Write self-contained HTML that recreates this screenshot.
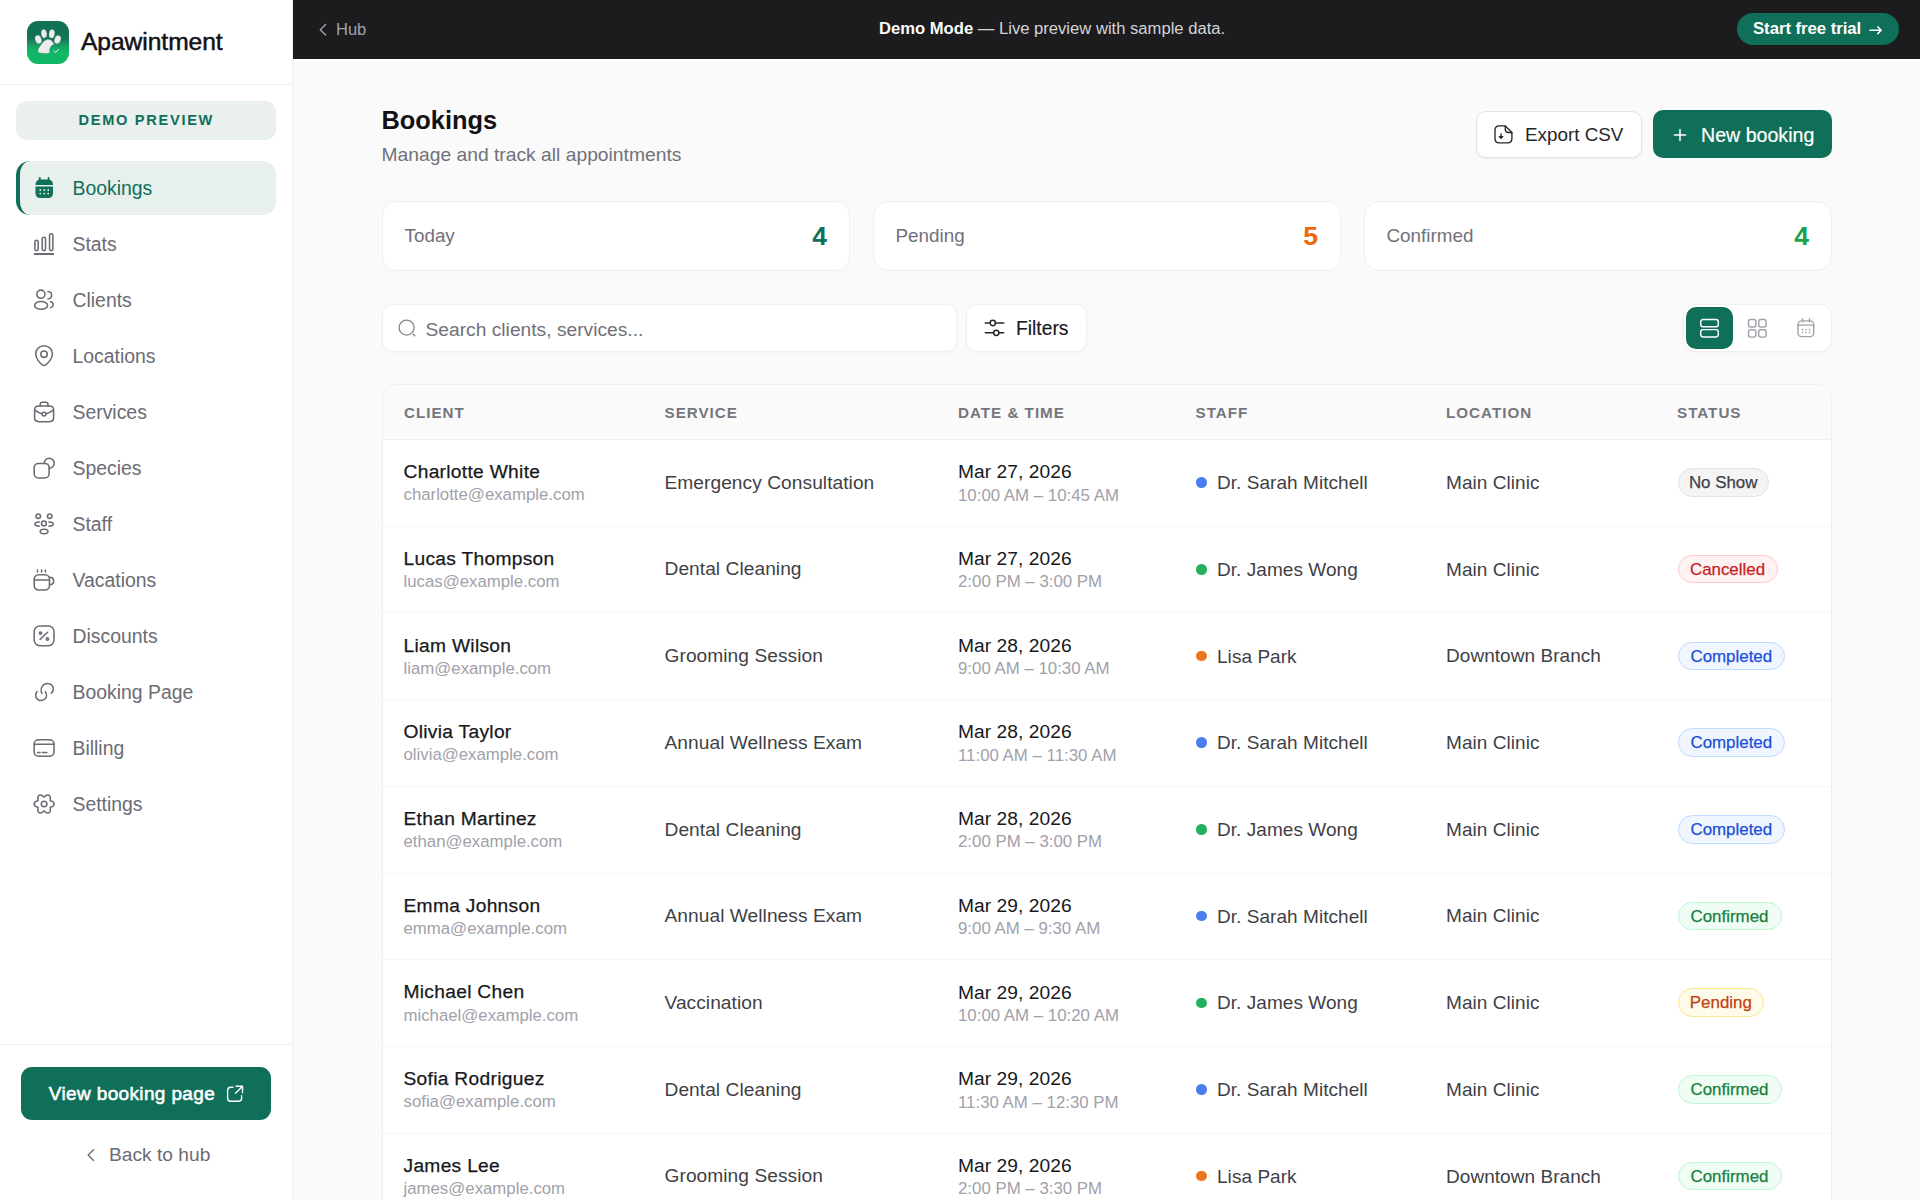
<!DOCTYPE html>
<html><head><meta charset="utf-8"><title>Bookings</title>
<style>
*{box-sizing:border-box;margin:0;padding:0}
html,body{width:1920px;height:1200px;overflow:hidden;background:#fafafa;font-family:"Liberation Sans",sans-serif}
.b{position:absolute}
.t{position:absolute;white-space:nowrap}
svg.b{display:block;overflow:visible}
</style></head><body>
<div class="b" style="left:0.00px;top:0.00px;width:293.00px;height:1200.00px;background:#fff;border-right:1px solid #efefef"></div>
<div class="b" style="left:0.00px;top:84.00px;width:292.00px;height:1.00px;background:#f0f0f0"></div>
<div class="b" style="left:27px;top:21px;width:42px;height:43px;border-radius:11px;overflow:hidden;background:linear-gradient(180deg,#117056 0%,#127357 40%,#1c8862 50%,#14a963 62%,#10b866 72%,#10b866 100%)">
<svg width="42" height="43" viewBox="0 0 42 43" fill="none">
<g fill="#ececec" stroke="#0c5a44" stroke-width="0.5" stroke-opacity="0.6">
<ellipse cx="11.3" cy="18.4" rx="3.2" ry="4.5" transform="rotate(-20 11.3 18.4)"/>
<ellipse cx="17" cy="12.7" rx="2.95" ry="4.45" transform="rotate(-8 17 12.7)"/>
<ellipse cx="24.85" cy="12.8" rx="2.95" ry="4.5" transform="rotate(8 24.85 12.8)"/>
<ellipse cx="30.6" cy="18.6" rx="3.2" ry="4.4" transform="rotate(20 30.6 18.6)"/>
<path d="M12.5 32C10.3 31.5 10.4 28.6 12.4 26C14.4 23.2 17 19 20.5 18.2C23.5 17.8 26 20.5 27.2 23.3A6.6 6.6 0 0 0 22.9 31.9C19.5 32.6 15.5 32.6 12.5 32Z"/>
</g>
<path d="M26.9 30L28.5 31.5L31.6 28.3" stroke="#f2f7f4" stroke-width="1" stroke-linecap="round" stroke-linejoin="round"/>
</svg></div>
<div class="t " style="left:81.00px;top:30.27px;font-size:24.6px;line-height:24.6px;color:#121214;font-weight:400;-webkit-text-stroke:0.5px #121214;letter-spacing:-0.05px">Apawintment</div>
<div class="b" style="left:16.00px;top:101.00px;width:260.00px;height:39.00px;background:#e9f0ee;border-radius:11px"></div>
<div class="t " style="left:78.50px;top:113.24px;font-size:14.6px;line-height:14.6px;color:#106f59;font-weight:700;letter-spacing:1.7px">DEMO PREVIEW</div>
<div class="b" style="left:16px;top:161px;width:260px;height:54px;background:#e7f0ed;border-radius:13px;overflow:hidden">
<div class="b" style="left:0;top:0;width:30px;height:54px;border-left:4px solid #106f59;border-radius:14px 0 0 14px"></div></div>
<svg class="b" style="left:34.50px;top:177.00px;" width="19" height="22" viewBox="0 0 19 22" fill="none"><path d="M4.8 0.9V3M13.6 0.9V3" stroke="#106f59" stroke-width="1.8" stroke-linecap="round"/><path d="M0.5 7.6C0.5 4.6 2.4 2.6 5.4 2.6H13.1C16.1 2.6 18 4.6 18 7.6V7.9H0.5Z" fill="#106f59"/><path d="M0.5 9.4H18V16.2C18 19.2 16.1 21 13.1 21H5.4C2.4 21 0.5 19.2 0.5 16.2Z" fill="#106f59"/><g fill="#e7f0ed"><circle cx="5.3" cy="13" r="0.95"/><circle cx="9.25" cy="13" r="0.95"/><circle cx="13.2" cy="13" r="0.95"/><circle cx="5.3" cy="16.6" r="0.95"/><circle cx="9.25" cy="16.6" r="0.95"/><circle cx="13.2" cy="16.6" r="0.95"/></g></svg>
<div class="t " style="left:72.50px;top:178.97px;font-size:19.4px;line-height:19.4px;color:#106f59;font-weight:400;">Bookings</div>
<svg class="b" style="left:34.00px;top:233.00px;" width="22" height="23" viewBox="0 0 22 23" fill="none"><g stroke="#6b6b74" stroke-width="1.55" stroke-linecap="round"><rect x="0.9" y="7.2" width="3.3" height="10.4" rx="1.65"/><rect x="8.2" y="4.2" width="3.3" height="13.4" rx="1.65"/><rect x="15.55" y="0.8" width="3.3" height="16.8" rx="1.65"/><path d="M0.6 21H19.2" stroke-width="1.8"/></g></svg>
<div class="t " style="left:72.50px;top:235.07px;font-size:19.4px;line-height:19.4px;color:#6b6b74;font-weight:400;">Stats</div>
<svg class="b" style="left:34.00px;top:289.00px;" width="22" height="23" viewBox="0 0 22 23" fill="none"><g stroke="#6b6b74" stroke-width="1.55" stroke-linecap="round"><circle cx="6.9" cy="5.2" r="4.1"/><ellipse cx="7.1" cy="16.4" rx="6.5" ry="3.9"/><path d="M14 2.6C16.6 2.8 17.7 4.6 17.6 6.3C17.5 8.2 16.2 9.8 14 9.9"/><path d="M16.5 12.8C18.4 13.3 19.3 14.6 19.2 15.8C19.1 17.2 18 18.4 16.6 18.8"/></g></svg>
<div class="t " style="left:72.50px;top:291.07px;font-size:19.4px;line-height:19.4px;color:#6b6b74;font-weight:400;">Clients</div>
<svg class="b" style="left:34.00px;top:345.00px;" width="22" height="23" viewBox="0 0 22 23" fill="none"><g stroke="#6b6b74" stroke-width="1.55" stroke-linecap="round"><path d="M10 0.8C14.8 0.8 18.45 4.4 18.45 9C18.45 13.5 14 18.5 11.3 20C10.5 20.6 9.5 20.6 8.7 20C6 18.5 1.7 13.5 1.7 9C1.7 4.4 5.2 0.8 10 0.8Z"/><circle cx="10.05" cy="9.2" r="3.2"/></g></svg>
<div class="t " style="left:72.50px;top:347.07px;font-size:19.4px;line-height:19.4px;color:#6b6b74;font-weight:400;">Locations</div>
<svg class="b" style="left:34.00px;top:401.00px;" width="22" height="23" viewBox="0 0 22 23" fill="none"><g stroke="#6b6b74" stroke-width="1.55" stroke-linecap="round"><path d="M4.8 5H15.4C17.8 5 19.6 6.6 19.6 9V16.6C19.6 19 17.9 20.7 15.5 20.7H4.7C2.3 20.7 0.6 19 0.6 16.6V9C0.6 6.6 2.4 5 4.8 5Z"/><path d="M6.2 5V3.5C6.2 2.2 7 1.3 8.3 1.3H11.9C13.2 1.3 14 2.2 14 3.5V5"/><path d="M0.8 9.2C2.8 10.8 5.2 12 8 12.7M12 12.7C14.8 12 17.3 10.8 19.4 9.2"/><circle cx="9.95" cy="13.1" r="1.95"/></g></svg>
<div class="t " style="left:72.50px;top:403.07px;font-size:19.4px;line-height:19.4px;color:#6b6b74;font-weight:400;">Services</div>
<svg class="b" style="left:34.00px;top:457.00px;" width="22" height="23" viewBox="0 0 22 23" fill="none"><g stroke="#6b6b74" stroke-width="1.55" stroke-linecap="round"><rect x="0.2" y="6.4" width="14.9" height="14.6" rx="4.2"/><path d="M10.2 6.4A5 5 0 1 1 15.1 11.2"/></g></svg>
<div class="t " style="left:72.50px;top:459.07px;font-size:19.4px;line-height:19.4px;color:#6b6b74;font-weight:400;">Species</div>
<svg class="b" style="left:34.00px;top:513.00px;" width="22" height="23" viewBox="0 0 22 23" fill="none"><g stroke="#6b6b74" stroke-width="1.55" stroke-linecap="round"><circle cx="4.25" cy="3.3" r="2.25"/><circle cx="15.7" cy="3.3" r="2.25"/><circle cx="9.9" cy="10.4" r="2.4"/><ellipse cx="10.1" cy="18.5" rx="3.9" ry="2.25"/><path d="M5.3 8.9C2.5 9 0.9 10 0.9 11.1C0.9 12.3 2.5 13.2 5.3 13.3"/><path d="M14.9 8.9C17.7 9 19.3 10 19.3 11.1C19.3 12.3 17.7 13.2 14.9 13.3"/></g></svg>
<div class="t " style="left:72.50px;top:515.07px;font-size:19.4px;line-height:19.4px;color:#6b6b74;font-weight:400;">Staff</div>
<svg class="b" style="left:34.00px;top:569.00px;" width="22" height="23" viewBox="0 0 22 23" fill="none"><g stroke="#6b6b74" stroke-width="1.55" stroke-linecap="round"><rect x="0.2" y="5.7" width="15.3" height="15.3" rx="4.5"/><path d="M0.2 10.9H15.5"/><path d="M15.5 8.3C18 8.3 19.6 9.8 19.6 12C19.6 14.2 18 15.8 15.5 15.8"/><path d="M3.5 0.9V2.9M7.6 0.9V2.9M11.4 0.9V2.9"/></g></svg>
<div class="t " style="left:72.50px;top:571.07px;font-size:19.4px;line-height:19.4px;color:#6b6b74;font-weight:400;">Vacations</div>
<svg class="b" style="left:34.00px;top:625.00px;" width="22" height="23" viewBox="0 0 22 23" fill="none"><g stroke="#6b6b74" stroke-width="1.55" stroke-linecap="round"><rect x="0.2" y="0.9" width="19.8" height="19.8" rx="5.6"/><path d="M6.1 14.4L13.6 7.25"/><circle cx="6.5" cy="8" r="1.1"/><circle cx="13.4" cy="14" r="1.15"/></g></svg>
<div class="t " style="left:72.50px;top:627.07px;font-size:19.4px;line-height:19.4px;color:#6b6b74;font-weight:400;">Discounts</div>
<svg class="b" style="left:34.00px;top:681.00px;" width="22" height="23" viewBox="0 0 22 23" fill="none"><g stroke="#6b6b74" stroke-width="1.55" stroke-linecap="round"><path d="M8 12.4C6.7 10.2 6.9 6.6 9.1 4.3C11.4 1.9 15.6 1.7 17.9 4.2C20 6.5 19.7 10.3 17.3 12.2"/><path d="M3.1 10.4C1.2 12.5 1.2 16 3.3 18.1C5.4 20.1 8.8 20.1 10.9 18C12.9 16 13 12.9 11.3 10.7"/></g></svg>
<div class="t " style="left:72.50px;top:683.07px;font-size:19.4px;line-height:19.4px;color:#6b6b74;font-weight:400;">Booking Page</div>
<svg class="b" style="left:34.00px;top:737.00px;" width="22" height="23" viewBox="0 0 22 23" fill="none"><g stroke="#6b6b74" stroke-width="1.55" stroke-linecap="round"><rect x="0.2" y="2.8" width="19.8" height="16.4" rx="4.2"/><path d="M0.2 7.25H20"/><path d="M3.5 15.5H6.1M8.4 15.5H12.9"/></g></svg>
<div class="t " style="left:72.50px;top:739.07px;font-size:19.4px;line-height:19.4px;color:#6b6b74;font-weight:400;">Billing</div>
<svg class="b" style="left:34.00px;top:793.00px;" width="22" height="23" viewBox="0 0 22 23" fill="none"><g stroke="#6b6b74" stroke-width="1.55" stroke-linecap="round"><path d="M20.10 11.00 L20.03 11.52 L19.84 12.02 L19.53 12.49 L19.13 12.92 L18.65 13.29 L18.11 13.60 L17.56 13.86 L17.02 14.08 L16.54 14.28 L16.16 14.50 L16.16 14.93 L16.23 15.46 L16.31 16.03 L16.36 16.64 L16.36 17.26 L16.28 17.86 L16.11 18.42 L15.86 18.93 L15.52 19.34 L15.10 19.66 L14.62 19.86 L14.08 19.95 L13.52 19.92 L12.95 19.78 L12.39 19.55 L11.85 19.24 L11.35 18.89 L10.89 18.54 L10.48 18.21 L10.10 18.00 L9.72 18.21 L9.31 18.54 L8.85 18.89 L8.35 19.24 L7.81 19.55 L7.25 19.78 L6.68 19.92 L6.12 19.95 L5.58 19.86 L5.10 19.66 L4.68 19.34 L4.34 18.93 L4.09 18.42 L3.92 17.86 L3.84 17.26 L3.84 16.64 L3.89 16.03 L3.97 15.46 L4.04 14.93 L4.04 14.50 L3.66 14.28 L3.18 14.08 L2.64 13.86 L2.09 13.60 L1.55 13.29 L1.07 12.92 L0.67 12.49 L0.36 12.02 L0.17 11.52 L0.10 11.00 L0.17 10.48 L0.36 9.98 L0.67 9.51 L1.07 9.08 L1.55 8.71 L2.09 8.40 L2.64 8.14 L3.18 7.92 L3.66 7.72 L4.04 7.50 L4.04 7.07 L3.97 6.54 L3.89 5.97 L3.84 5.36 L3.84 4.74 L3.92 4.14 L4.09 3.58 L4.34 3.07 L4.68 2.66 L5.10 2.34 L5.58 2.14 L6.12 2.05 L6.68 2.08 L7.25 2.22 L7.81 2.45 L8.35 2.76 L8.85 3.11 L9.31 3.46 L9.72 3.79 L10.10 4.00 L10.48 3.79 L10.89 3.46 L11.35 3.11 L11.85 2.76 L12.39 2.45 L12.95 2.22 L13.52 2.08 L14.08 2.05 L14.62 2.14 L15.10 2.34 L15.52 2.66 L15.86 3.07 L16.11 3.58 L16.28 4.14 L16.36 4.74 L16.36 5.36 L16.31 5.97 L16.23 6.54 L16.16 7.07 L16.16 7.50 L16.54 7.72 L17.02 7.92 L17.56 8.14 L18.11 8.40 L18.65 8.71 L19.13 9.08 L19.53 9.51 L19.84 9.98 L20.03 10.48 L20.10 11.00Z" stroke-linejoin="round"/><circle cx="10.1" cy="11" r="2.8"/></g></svg>
<div class="t " style="left:72.50px;top:795.07px;font-size:19.4px;line-height:19.4px;color:#6b6b74;font-weight:400;">Settings</div>
<div class="b" style="left:0.00px;top:1044.00px;width:292.00px;height:1.00px;background:#f0f0f0"></div>
<div class="b" style="left:21.00px;top:1067.00px;width:250.00px;height:53.00px;background:#106f59;border-radius:11px"></div>
<div class="t " style="left:48.80px;top:1084.11px;font-size:19.0px;line-height:19.0px;color:#fff;font-weight:400;letter-spacing:0.36px;-webkit-text-stroke:0.55px #fff">View booking page</div>
<svg class="b" style="left:225.50px;top:1084.50px;" width="18" height="18" viewBox="0 0 18 18" fill="none"><g stroke="#fff" stroke-width="1.4" stroke-linecap="round" stroke-linejoin="round"><path d="M7 2.2H4.8C2.9 2.2 1.6 3.5 1.6 5.4V13C1.6 14.9 2.9 16.2 4.8 16.2H12.4C14.3 16.2 15.6 14.9 15.6 13V10.8"/><path d="M10 1.3H16.5V7.8M16.5 1.3L9.5 8.3"/></g></svg>
<svg class="b" style="left:85.50px;top:1147.50px;" width="10" height="15" viewBox="0 0 10 15" fill="none"><path d="M7.5 1.8L2.2 7.1L7.5 12.4" stroke="#6b6b74" stroke-width="1.4" stroke-linecap="round" stroke-linejoin="round"/></svg>
<div class="t " style="left:109.00px;top:1144.99px;font-size:19.2px;line-height:19.2px;color:#6b6b74;font-weight:400;">Back to hub</div>
<div class="b" style="left:293.00px;top:0.00px;width:1627.00px;height:59.00px;background:#1c1c1e"></div>
<div class="b" style="left:293.00px;top:59.00px;width:1627.00px;height:1.50px;background:#fff"></div>
<svg class="b" style="left:317.50px;top:22.00px;" width="10" height="15" viewBox="0 0 10 15" fill="none"><path d="M7.6 2.5L2.25 7.8L7.6 13.1" stroke="#a1a1aa" stroke-width="1.4" stroke-linecap="round" stroke-linejoin="round"/></svg>
<div class="t " style="left:336.00px;top:20.73px;font-size:16.5px;line-height:16.5px;color:#a1a1aa;font-weight:400;">Hub</div>
<div class="t" style="left:879px;top:20.4px;font-size:16.62px;line-height:18px;color:#d4d4d8;white-space:nowrap"><span style="color:#fafafa;font-weight:700">Demo Mode</span> — Live preview with sample data.</div>
<div class="b" style="left:1737.00px;top:13.00px;width:162.00px;height:32.00px;background:#106f59;border-radius:16px"></div>
<div class="t " style="left:1753.00px;top:21.42px;font-size:16.75px;line-height:16.75px;color:#fff;font-weight:700;letter-spacing:-0.05px">Start free trial</div>
<svg class="b" style="left:1868.00px;top:25.00px;" width="15" height="10" viewBox="0 0 15 10" fill="none"><path d="M2 5.2H13.2M9.8 1.8L13.2 5.2L9.8 8.6" stroke="#fff" stroke-width="1.5" stroke-linecap="round" stroke-linejoin="round"/></svg>
<div class="t " style="left:381.50px;top:107.69px;font-size:25.4px;line-height:25.4px;color:#121214;font-weight:700;">Bookings</div>
<div class="t " style="left:381.50px;top:145.08px;font-size:19.27px;line-height:19.27px;color:#71717a;font-weight:400;">Manage and track all appointments</div>
<div class="b" style="left:1476.00px;top:111.00px;width:166.00px;height:47.00px;background:#fff;border:1px solid #e4e4e7;border-radius:10px;box-shadow:0 1px 2px rgba(0,0,0,0.07)"></div>
<svg class="b" style="left:1493.00px;top:124.00px;" width="21" height="21" viewBox="0 0 21 21" fill="none"><g stroke="#27272a" stroke-width="1.35" stroke-linecap="round" stroke-linejoin="round"><path d="M12.3 1.9H6.3C3.6 1.9 2 3.6 2 6.2V14.6C2 17.3 3.6 18.9 6.3 18.9H14.6C17.3 18.9 18.9 17.3 18.9 14.6V8.5Z"/><path d="M12.3 1.9V5.5C12.3 7.2 13.2 8.5 15.3 8.5H18.9"/><path d="M6.3 12.6L8 14.3L9.7 12.6M8 9.8V14.3"/></g></svg>
<div class="t " style="left:1525.00px;top:125.85px;font-size:18.84px;line-height:18.84px;color:#27272a;font-weight:400;">Export CSV</div>
<div class="b" style="left:1653.00px;top:110.00px;width:179.00px;height:48.00px;background:#106f59;border-radius:10px"></div>
<svg class="b" style="left:1673.30px;top:127.60px;" width="14" height="14" viewBox="0 0 14 14" fill="none"><path d="M7 1.5V12.5M1.5 7H12.5" stroke="#fff" stroke-width="1.5" stroke-linecap="round"/></svg>
<div class="t " style="left:1701.00px;top:125.60px;font-size:19.6px;line-height:19.6px;color:#fff;font-weight:400;-webkit-text-stroke:0.2px #fff">New booking</div>
<div class="b" style="left:382.00px;top:201.00px;width:468.00px;height:70.00px;background:#fff;border:1px solid #f0f0f0;border-radius:15px"></div>
<div class="t " style="left:404.50px;top:226.84px;font-size:18.85px;line-height:18.85px;color:#71717a;font-weight:400;">Today</div>
<div class="t" style="left:382px;width:445px;text-align:right;top:222.86px;font-size:26.5px;line-height:26.5px;color:#106f59;font-weight:700">4</div>
<div class="b" style="left:873.00px;top:201.00px;width:468.00px;height:70.00px;background:#fff;border:1px solid #f0f0f0;border-radius:15px"></div>
<div class="t " style="left:895.50px;top:226.84px;font-size:18.85px;line-height:18.85px;color:#71717a;font-weight:400;">Pending</div>
<div class="t" style="left:873px;width:445px;text-align:right;top:222.86px;font-size:26.5px;line-height:26.5px;color:#ea6a0d;font-weight:700">5</div>
<div class="b" style="left:1364.00px;top:201.00px;width:468.00px;height:70.00px;background:#fff;border:1px solid #f0f0f0;border-radius:15px"></div>
<div class="t " style="left:1386.50px;top:226.84px;font-size:18.85px;line-height:18.85px;color:#71717a;font-weight:400;">Confirmed</div>
<div class="t" style="left:1364px;width:445px;text-align:right;top:222.86px;font-size:26.5px;line-height:26.5px;color:#16a34a;font-weight:700">4</div>
<div class="b" style="left:382.00px;top:304.00px;width:575.00px;height:48.00px;background:#fff;border:1px solid #f0f0f0;border-radius:11px;box-shadow:0 1px 2px rgba(0,0,0,0.03)"></div>
<svg class="b" style="left:397.70px;top:318.70px;" width="19" height="19" viewBox="0 0 19 19" fill="none"><g stroke="#85858d" stroke-width="1.3" stroke-linecap="round"><circle cx="8.6" cy="8.6" r="7.5"/><path d="M15.2 15.2L16.8 16.8"/></g></svg>
<div class="t " style="left:425.50px;top:319.62px;font-size:19.23px;line-height:19.23px;color:#71717a;font-weight:400;">Search clients, services...</div>
<div class="b" style="left:966.00px;top:304.00px;width:121.00px;height:48.00px;background:#fff;border:1px solid #f0f0f0;border-radius:11px;box-shadow:0 1px 2px rgba(0,0,0,0.03)"></div>
<svg class="b" style="left:984.00px;top:318.00px;" width="21" height="20" viewBox="0 0 21 20" fill="none"><g stroke="#27272a" stroke-width="1.5" stroke-linecap="round"><path d="M1.3 5H6.1M11.5 5H19.7M1.3 14.8H9.5M15 14.8H19.7"/><circle cx="8.8" cy="5" r="2.65"/><circle cx="12.25" cy="14.8" r="2.65"/></g></svg>
<div class="t " style="left:1016.00px;top:318.96px;font-size:19.3px;line-height:19.3px;color:#18181b;font-weight:400;-webkit-text-stroke:0.15px #18181b">Filters</div>
<div class="b" style="left:1683.00px;top:304.00px;width:149.00px;height:48.00px;background:#fff;border:1px solid #f0f0f0;border-radius:12px;box-shadow:0 1px 2px rgba(0,0,0,0.03)"></div>
<div class="b" style="left:1685.50px;top:307.00px;width:47.50px;height:42.00px;background:#106f59;border-radius:10px"></div>
<svg class="b" style="left:1698.50px;top:317.50px;" width="21" height="21" viewBox="0 0 21 21" fill="none"><g stroke="#fff" stroke-width="1.45"><rect x="1.7" y="1.5" width="17.6" height="7.3" rx="2.3"/><rect x="1.7" y="11.6" width="17.6" height="7.3" rx="2.3"/></g></svg>
<svg class="b" style="left:1747.00px;top:317.50px;" width="21" height="21" viewBox="0 0 21 21" fill="none"><g stroke="#a1a1aa" stroke-width="1.45"><rect x="1.5" y="1.5" width="7.4" height="7.4" rx="2"/><rect x="11.7" y="1.5" width="7.4" height="7.4" rx="2"/><rect x="1.5" y="11.7" width="7.4" height="7.4" rx="2"/><rect x="11.7" y="11.7" width="7.4" height="7.4" rx="2"/></g></svg>
<svg class="b" style="left:1795.50px;top:317.00px;" width="20" height="22" viewBox="0 0 20 22" fill="none"><g stroke="#a1a1aa" stroke-width="1.4" stroke-linecap="round"><path d="M6.5 1.6V4.8M13.5 1.6V4.8"/><rect x="2" y="3.9" width="15.7" height="15.7" rx="3.6"/><path d="M2 8.1H17.7"/></g><g fill="#a1a1aa"><circle cx="6.5" cy="12.5" r="0.85"/><circle cx="10" cy="12.5" r="0.85"/><circle cx="13.5" cy="12.5" r="0.85"/><circle cx="6.5" cy="15.3" r="0.85"/><circle cx="10" cy="15.3" r="0.85"/><circle cx="13.5" cy="15.3" r="0.85"/></g></svg>
<div class="b" style="left:382.00px;top:384.00px;width:1450.00px;height:900.00px;background:#fff;border:1px solid #efefef;border-radius:15px;overflow:hidden"></div>
<div class="b" style="left:383.00px;top:385.00px;width:1448.00px;height:54.50px;background:#fafafa;border-radius:14px 14px 0 0"></div>
<div class="b" style="left:383.00px;top:439.00px;width:1448.00px;height:1.00px;background:#f0f0f0"></div>
<div class="t " style="left:404.00px;top:405.13px;font-size:15.2px;line-height:15.2px;color:#75757d;font-weight:700;letter-spacing:1.0px">CLIENT</div>
<div class="t " style="left:664.50px;top:405.13px;font-size:15.2px;line-height:15.2px;color:#75757d;font-weight:700;letter-spacing:1.0px">SERVICE</div>
<div class="t " style="left:958.00px;top:405.13px;font-size:15.2px;line-height:15.2px;color:#75757d;font-weight:700;letter-spacing:1.0px">DATE &amp; TIME</div>
<div class="t " style="left:1195.50px;top:405.13px;font-size:15.2px;line-height:15.2px;color:#75757d;font-weight:700;letter-spacing:1.0px">STAFF</div>
<div class="t " style="left:1446.00px;top:405.13px;font-size:15.2px;line-height:15.2px;color:#75757d;font-weight:700;letter-spacing:1.0px">LOCATION</div>
<div class="t " style="left:1677.00px;top:405.13px;font-size:15.2px;line-height:15.2px;color:#75757d;font-weight:700;letter-spacing:1.0px">STATUS</div>
<div class="t " style="left:403.50px;top:462.14px;font-size:19.2px;line-height:19.2px;color:#18181b;font-weight:400;-webkit-text-stroke:0.25px #18181b;letter-spacing:0.3px">Charlotte White</div>
<div class="t " style="left:403.50px;top:487.38px;font-size:16.8px;line-height:16.8px;color:#a1a1aa;font-weight:400;">charlotte@example.com</div>
<div class="t " style="left:664.50px;top:472.77px;font-size:19.17px;line-height:19.17px;color:#3f3f46;font-weight:400;letter-spacing:0.05px">Emergency Consultation</div>
<div class="t " style="left:958.00px;top:462.34px;font-size:19.2px;line-height:19.2px;color:#18181b;font-weight:400;letter-spacing:0.05px">Mar 27, 2026</div>
<div class="t " style="left:958.00px;top:487.64px;font-size:16.84px;line-height:16.84px;color:#a1a1aa;font-weight:400;">10:00 AM – 10:45 AM</div>
<div class="b" style="left:1196.00px;top:477.30px;width:10.60px;height:10.60px;background:#4a7ef0;border-radius:50%"></div>
<div class="t " style="left:1217.00px;top:473.11px;font-size:19.0px;line-height:19.0px;color:#3f3f46;font-weight:400;letter-spacing:0.05px">Dr. Sarah Mitchell</div>
<div class="t " style="left:1446.00px;top:472.91px;font-size:19.0px;line-height:19.0px;color:#3f3f46;font-weight:400;letter-spacing:0.05px">Main Clinic</div>
<div class="t" style="left:1677.5px;top:468.20px;width:91.4px;height:28.5px;text-align:center;border-radius:15px;background:#f4f4f5;border:1px solid #e4e4e7;color:#3f3f46;font-size:16.9px;line-height:27.5px;-webkit-text-stroke:0.25px #3f3f46">No Show</div>
<div class="b" style="left:383.00px;top:525.70px;width:1448.00px;height:1.00px;background:#f6f6f7"></div>
<div class="t " style="left:403.50px;top:548.84px;font-size:19.2px;line-height:19.2px;color:#18181b;font-weight:400;-webkit-text-stroke:0.25px #18181b;letter-spacing:0.3px">Lucas Thompson</div>
<div class="t " style="left:403.50px;top:574.08px;font-size:16.8px;line-height:16.8px;color:#a1a1aa;font-weight:400;">lucas@example.com</div>
<div class="t " style="left:664.50px;top:559.47px;font-size:19.17px;line-height:19.17px;color:#3f3f46;font-weight:400;letter-spacing:0.05px">Dental Cleaning</div>
<div class="t " style="left:958.00px;top:549.04px;font-size:19.2px;line-height:19.2px;color:#18181b;font-weight:400;letter-spacing:0.05px">Mar 27, 2026</div>
<div class="t " style="left:958.00px;top:574.34px;font-size:16.84px;line-height:16.84px;color:#a1a1aa;font-weight:400;">2:00 PM – 3:00 PM</div>
<div class="b" style="left:1196.00px;top:564.00px;width:10.60px;height:10.60px;background:#22b05a;border-radius:50%"></div>
<div class="t " style="left:1217.00px;top:559.81px;font-size:19.0px;line-height:19.0px;color:#3f3f46;font-weight:400;letter-spacing:0.05px">Dr. James Wong</div>
<div class="t " style="left:1446.00px;top:559.61px;font-size:19.0px;line-height:19.0px;color:#3f3f46;font-weight:400;letter-spacing:0.05px">Main Clinic</div>
<div class="t" style="left:1677.5px;top:554.90px;width:100px;height:28.5px;text-align:center;border-radius:15px;background:#fef2f2;border:1px solid #fecaca;color:#c81e1e;font-size:16.9px;line-height:27.5px;-webkit-text-stroke:0.25px #c81e1e">Cancelled</div>
<div class="b" style="left:383.00px;top:612.40px;width:1448.00px;height:1.00px;background:#f6f6f7"></div>
<div class="t " style="left:403.50px;top:635.54px;font-size:19.2px;line-height:19.2px;color:#18181b;font-weight:400;-webkit-text-stroke:0.25px #18181b;letter-spacing:0.3px">Liam Wilson</div>
<div class="t " style="left:403.50px;top:660.78px;font-size:16.8px;line-height:16.8px;color:#a1a1aa;font-weight:400;">liam@example.com</div>
<div class="t " style="left:664.50px;top:646.17px;font-size:19.17px;line-height:19.17px;color:#3f3f46;font-weight:400;letter-spacing:0.05px">Grooming Session</div>
<div class="t " style="left:958.00px;top:635.74px;font-size:19.2px;line-height:19.2px;color:#18181b;font-weight:400;letter-spacing:0.05px">Mar 28, 2026</div>
<div class="t " style="left:958.00px;top:661.04px;font-size:16.84px;line-height:16.84px;color:#a1a1aa;font-weight:400;">9:00 AM – 10:30 AM</div>
<div class="b" style="left:1196.00px;top:650.70px;width:10.60px;height:10.60px;background:#ee7420;border-radius:50%"></div>
<div class="t " style="left:1217.00px;top:646.51px;font-size:19.0px;line-height:19.0px;color:#3f3f46;font-weight:400;letter-spacing:0.05px">Lisa Park</div>
<div class="t " style="left:1446.00px;top:646.31px;font-size:19.0px;line-height:19.0px;color:#3f3f46;font-weight:400;letter-spacing:0.05px">Downtown Branch</div>
<div class="t" style="left:1677.5px;top:641.60px;width:107.6px;height:28.5px;text-align:center;border-radius:15px;background:#eff6ff;border:1px solid #bfdbfe;color:#1d4ed8;font-size:16.9px;line-height:27.5px;-webkit-text-stroke:0.25px #1d4ed8">Completed</div>
<div class="b" style="left:383.00px;top:699.10px;width:1448.00px;height:1.00px;background:#f6f6f7"></div>
<div class="t " style="left:403.50px;top:722.24px;font-size:19.2px;line-height:19.2px;color:#18181b;font-weight:400;-webkit-text-stroke:0.25px #18181b;letter-spacing:0.3px">Olivia Taylor</div>
<div class="t " style="left:403.50px;top:747.48px;font-size:16.8px;line-height:16.8px;color:#a1a1aa;font-weight:400;">olivia@example.com</div>
<div class="t " style="left:664.50px;top:732.87px;font-size:19.17px;line-height:19.17px;color:#3f3f46;font-weight:400;letter-spacing:0.05px">Annual Wellness Exam</div>
<div class="t " style="left:958.00px;top:722.44px;font-size:19.2px;line-height:19.2px;color:#18181b;font-weight:400;letter-spacing:0.05px">Mar 28, 2026</div>
<div class="t " style="left:958.00px;top:747.74px;font-size:16.84px;line-height:16.84px;color:#a1a1aa;font-weight:400;">11:00 AM – 11:30 AM</div>
<div class="b" style="left:1196.00px;top:737.40px;width:10.60px;height:10.60px;background:#4a7ef0;border-radius:50%"></div>
<div class="t " style="left:1217.00px;top:733.21px;font-size:19.0px;line-height:19.0px;color:#3f3f46;font-weight:400;letter-spacing:0.05px">Dr. Sarah Mitchell</div>
<div class="t " style="left:1446.00px;top:733.01px;font-size:19.0px;line-height:19.0px;color:#3f3f46;font-weight:400;letter-spacing:0.05px">Main Clinic</div>
<div class="t" style="left:1677.5px;top:728.30px;width:107.6px;height:28.5px;text-align:center;border-radius:15px;background:#eff6ff;border:1px solid #bfdbfe;color:#1d4ed8;font-size:16.9px;line-height:27.5px;-webkit-text-stroke:0.25px #1d4ed8">Completed</div>
<div class="b" style="left:383.00px;top:785.80px;width:1448.00px;height:1.00px;background:#f6f6f7"></div>
<div class="t " style="left:403.50px;top:808.94px;font-size:19.2px;line-height:19.2px;color:#18181b;font-weight:400;-webkit-text-stroke:0.25px #18181b;letter-spacing:0.3px">Ethan Martinez</div>
<div class="t " style="left:403.50px;top:834.18px;font-size:16.8px;line-height:16.8px;color:#a1a1aa;font-weight:400;">ethan@example.com</div>
<div class="t " style="left:664.50px;top:819.57px;font-size:19.17px;line-height:19.17px;color:#3f3f46;font-weight:400;letter-spacing:0.05px">Dental Cleaning</div>
<div class="t " style="left:958.00px;top:809.14px;font-size:19.2px;line-height:19.2px;color:#18181b;font-weight:400;letter-spacing:0.05px">Mar 28, 2026</div>
<div class="t " style="left:958.00px;top:834.44px;font-size:16.84px;line-height:16.84px;color:#a1a1aa;font-weight:400;">2:00 PM – 3:00 PM</div>
<div class="b" style="left:1196.00px;top:824.10px;width:10.60px;height:10.60px;background:#22b05a;border-radius:50%"></div>
<div class="t " style="left:1217.00px;top:819.91px;font-size:19.0px;line-height:19.0px;color:#3f3f46;font-weight:400;letter-spacing:0.05px">Dr. James Wong</div>
<div class="t " style="left:1446.00px;top:819.71px;font-size:19.0px;line-height:19.0px;color:#3f3f46;font-weight:400;letter-spacing:0.05px">Main Clinic</div>
<div class="t" style="left:1677.5px;top:815.00px;width:107.6px;height:28.5px;text-align:center;border-radius:15px;background:#eff6ff;border:1px solid #bfdbfe;color:#1d4ed8;font-size:16.9px;line-height:27.5px;-webkit-text-stroke:0.25px #1d4ed8">Completed</div>
<div class="b" style="left:383.00px;top:872.50px;width:1448.00px;height:1.00px;background:#f6f6f7"></div>
<div class="t " style="left:403.50px;top:895.64px;font-size:19.2px;line-height:19.2px;color:#18181b;font-weight:400;-webkit-text-stroke:0.25px #18181b;letter-spacing:0.3px">Emma Johnson</div>
<div class="t " style="left:403.50px;top:920.88px;font-size:16.8px;line-height:16.8px;color:#a1a1aa;font-weight:400;">emma@example.com</div>
<div class="t " style="left:664.50px;top:906.27px;font-size:19.17px;line-height:19.17px;color:#3f3f46;font-weight:400;letter-spacing:0.05px">Annual Wellness Exam</div>
<div class="t " style="left:958.00px;top:895.84px;font-size:19.2px;line-height:19.2px;color:#18181b;font-weight:400;letter-spacing:0.05px">Mar 29, 2026</div>
<div class="t " style="left:958.00px;top:921.14px;font-size:16.84px;line-height:16.84px;color:#a1a1aa;font-weight:400;">9:00 AM – 9:30 AM</div>
<div class="b" style="left:1196.00px;top:910.80px;width:10.60px;height:10.60px;background:#4a7ef0;border-radius:50%"></div>
<div class="t " style="left:1217.00px;top:906.61px;font-size:19.0px;line-height:19.0px;color:#3f3f46;font-weight:400;letter-spacing:0.05px">Dr. Sarah Mitchell</div>
<div class="t " style="left:1446.00px;top:906.41px;font-size:19.0px;line-height:19.0px;color:#3f3f46;font-weight:400;letter-spacing:0.05px">Main Clinic</div>
<div class="t" style="left:1677.5px;top:901.70px;width:104px;height:28.5px;text-align:center;border-radius:15px;background:#f0fdf4;border:1px solid #bbf7d0;color:#15803d;font-size:16.9px;line-height:27.5px;-webkit-text-stroke:0.25px #15803d">Confirmed</div>
<div class="b" style="left:383.00px;top:959.20px;width:1448.00px;height:1.00px;background:#f6f6f7"></div>
<div class="t " style="left:403.50px;top:982.34px;font-size:19.2px;line-height:19.2px;color:#18181b;font-weight:400;-webkit-text-stroke:0.25px #18181b;letter-spacing:0.3px">Michael Chen</div>
<div class="t " style="left:403.50px;top:1007.58px;font-size:16.8px;line-height:16.8px;color:#a1a1aa;font-weight:400;">michael@example.com</div>
<div class="t " style="left:664.50px;top:992.97px;font-size:19.17px;line-height:19.17px;color:#3f3f46;font-weight:400;letter-spacing:0.05px">Vaccination</div>
<div class="t " style="left:958.00px;top:982.54px;font-size:19.2px;line-height:19.2px;color:#18181b;font-weight:400;letter-spacing:0.05px">Mar 29, 2026</div>
<div class="t " style="left:958.00px;top:1007.84px;font-size:16.84px;line-height:16.84px;color:#a1a1aa;font-weight:400;">10:00 AM – 10:20 AM</div>
<div class="b" style="left:1196.00px;top:997.50px;width:10.60px;height:10.60px;background:#22b05a;border-radius:50%"></div>
<div class="t " style="left:1217.00px;top:993.31px;font-size:19.0px;line-height:19.0px;color:#3f3f46;font-weight:400;letter-spacing:0.05px">Dr. James Wong</div>
<div class="t " style="left:1446.00px;top:993.11px;font-size:19.0px;line-height:19.0px;color:#3f3f46;font-weight:400;letter-spacing:0.05px">Main Clinic</div>
<div class="t" style="left:1677.5px;top:988.40px;width:86.7px;height:28.5px;text-align:center;border-radius:15px;background:#fffbeb;border:1px solid #fde68a;color:#c2410c;font-size:16.9px;line-height:27.5px;-webkit-text-stroke:0.25px #c2410c">Pending</div>
<div class="b" style="left:383.00px;top:1045.90px;width:1448.00px;height:1.00px;background:#f6f6f7"></div>
<div class="t " style="left:403.50px;top:1069.04px;font-size:19.2px;line-height:19.2px;color:#18181b;font-weight:400;-webkit-text-stroke:0.25px #18181b;letter-spacing:0.3px">Sofia Rodriguez</div>
<div class="t " style="left:403.50px;top:1094.28px;font-size:16.8px;line-height:16.8px;color:#a1a1aa;font-weight:400;">sofia@example.com</div>
<div class="t " style="left:664.50px;top:1079.67px;font-size:19.17px;line-height:19.17px;color:#3f3f46;font-weight:400;letter-spacing:0.05px">Dental Cleaning</div>
<div class="t " style="left:958.00px;top:1069.24px;font-size:19.2px;line-height:19.2px;color:#18181b;font-weight:400;letter-spacing:0.05px">Mar 29, 2026</div>
<div class="t " style="left:958.00px;top:1094.54px;font-size:16.84px;line-height:16.84px;color:#a1a1aa;font-weight:400;">11:30 AM – 12:30 PM</div>
<div class="b" style="left:1196.00px;top:1084.20px;width:10.60px;height:10.60px;background:#4a7ef0;border-radius:50%"></div>
<div class="t " style="left:1217.00px;top:1080.01px;font-size:19.0px;line-height:19.0px;color:#3f3f46;font-weight:400;letter-spacing:0.05px">Dr. Sarah Mitchell</div>
<div class="t " style="left:1446.00px;top:1079.81px;font-size:19.0px;line-height:19.0px;color:#3f3f46;font-weight:400;letter-spacing:0.05px">Main Clinic</div>
<div class="t" style="left:1677.5px;top:1075.10px;width:104px;height:28.5px;text-align:center;border-radius:15px;background:#f0fdf4;border:1px solid #bbf7d0;color:#15803d;font-size:16.9px;line-height:27.5px;-webkit-text-stroke:0.25px #15803d">Confirmed</div>
<div class="b" style="left:383.00px;top:1132.60px;width:1448.00px;height:1.00px;background:#f6f6f7"></div>
<div class="t " style="left:403.50px;top:1155.74px;font-size:19.2px;line-height:19.2px;color:#18181b;font-weight:400;-webkit-text-stroke:0.25px #18181b;letter-spacing:0.3px">James Lee</div>
<div class="t " style="left:403.50px;top:1180.98px;font-size:16.8px;line-height:16.8px;color:#a1a1aa;font-weight:400;">james@example.com</div>
<div class="t " style="left:664.50px;top:1166.37px;font-size:19.17px;line-height:19.17px;color:#3f3f46;font-weight:400;letter-spacing:0.05px">Grooming Session</div>
<div class="t " style="left:958.00px;top:1155.94px;font-size:19.2px;line-height:19.2px;color:#18181b;font-weight:400;letter-spacing:0.05px">Mar 29, 2026</div>
<div class="t " style="left:958.00px;top:1181.24px;font-size:16.84px;line-height:16.84px;color:#a1a1aa;font-weight:400;">2:00 PM – 3:30 PM</div>
<div class="b" style="left:1196.00px;top:1170.90px;width:10.60px;height:10.60px;background:#ee7420;border-radius:50%"></div>
<div class="t " style="left:1217.00px;top:1166.71px;font-size:19.0px;line-height:19.0px;color:#3f3f46;font-weight:400;letter-spacing:0.05px">Lisa Park</div>
<div class="t " style="left:1446.00px;top:1166.51px;font-size:19.0px;line-height:19.0px;color:#3f3f46;font-weight:400;letter-spacing:0.05px">Downtown Branch</div>
<div class="t" style="left:1677.5px;top:1161.80px;width:104px;height:28.5px;text-align:center;border-radius:15px;background:#f0fdf4;border:1px solid #bbf7d0;color:#15803d;font-size:16.9px;line-height:27.5px;-webkit-text-stroke:0.25px #15803d">Confirmed</div>
</body></html>
